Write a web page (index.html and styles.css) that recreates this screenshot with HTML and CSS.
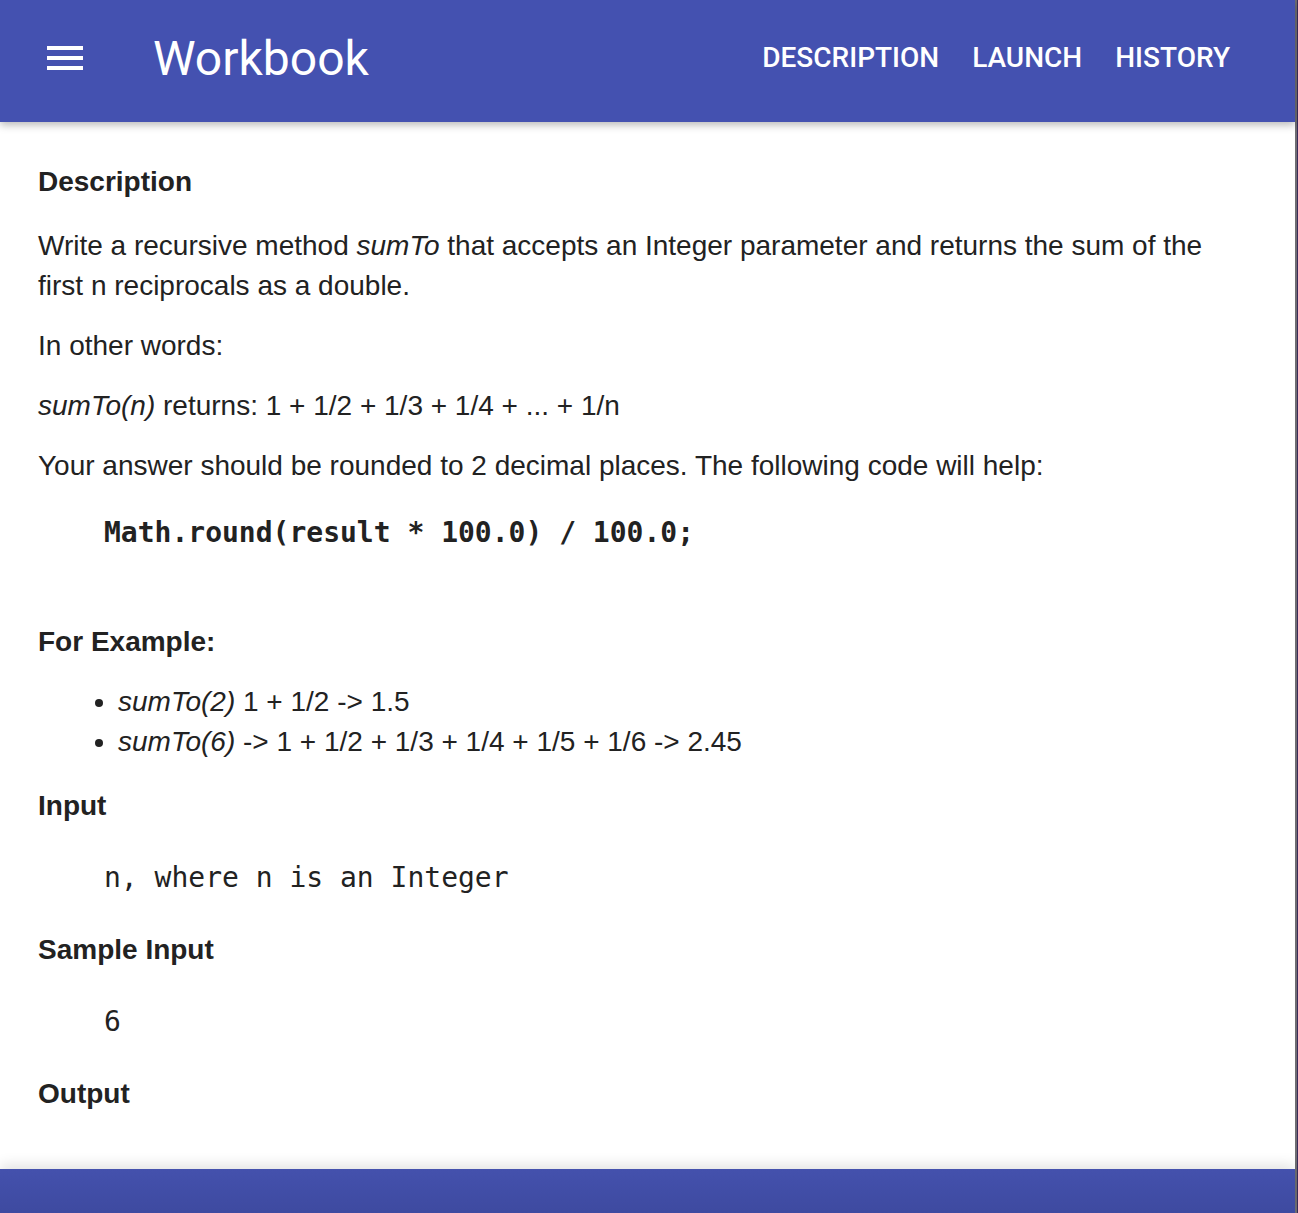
FILE: index.html
```html
<!DOCTYPE html>
<html lang="en">
<head>
<meta charset="utf-8">
<title>Workbook</title>
<link rel="stylesheet" href="styles.css">
</head>
<body>
<div class="app">
  <header class="topbar">
    <button class="menu" aria-label="Menu">
      <svg width="36" height="26" viewBox="0 0 36 26"><rect x="0" y="1" width="36" height="4" fill="#fff"/><rect x="0" y="11" width="36" height="4" fill="#fff"/><rect x="0" y="21" width="36" height="4" fill="#fff"/></svg>
    </button>
    <div class="title">Workbook</div>
    <nav class="nav">
      <a>DESCRIPTION</a>
      <a>LAUNCH</a>
      <a>HISTORY</a>
    </nav>
  </header>
  <main class="content">
    <h3 class="h first">Description</h3>
    <p class="p gap24">Write a recursive method <em>sumTo</em> that accepts an Integer parameter and returns the sum of the first n reciprocals as a double.</p>
    <p class="p">In other words:</p>
    <p class="p"><em>sumTo(n)</em> returns: 1 + 1/2 + 1/3 + 1/4 + ... + 1/n</p>
    <p class="p">Your answer should be rounded to 2 decimal places. The following code will help:</p>
    <pre class="code bold">Math.round(result * 100.0) / 100.0;</pre>
    <h3 class="h after-bold">For Example:</h3>
    <ul class="list">
      <li><em>sumTo(2)</em> 1 + 1/2 -&gt; 1.5</li>
      <li><em>sumTo(6)</em> -&gt; 1 + 1/2 + 1/3 + 1/4 + 1/5 + 1/6 -&gt; 2.45</li>
    </ul>
    <h3 class="h gap24">Input</h3>
    <pre class="code">n, where n is an Integer</pre>
    <h3 class="h gap32">Sample Input</h3>
    <pre class="code">6</pre>
    <h3 class="h gap32">Output</h3>
  </main>
</div>
<div class="bottombar"></div>
</body>
</html>
```
FILE: styles.css
```css
html, body {
  margin: 0;
  padding: 0;
}
body {
  background: #3b2c59;
  font-family: "Liberation Sans", Arial, sans-serif;
  color: #222;
}
.app {
  margin-right: 1px;
  border-right: 2px solid #6e6d72;
  background: #fff;
  min-height: 1213px;
}
.topbar {
  height: 122px;
  background: #4451b0;
  display: flex;
  align-items: center;
  box-shadow: 0 3px 8px rgba(0,0,0,0.28);
  position: relative;
  z-index: 1;
}
.menu {
  background: none;
  border: 0;
  padding: 0;
  margin: 0 0 0 47px;
  width: 36px;
  height: 26px;
  display: flex;
  margin-top: -7px;
}
.title {
  font-family: Roboto, "Open Sans", sans-serif;
  font-size: 48px;
  color: #fff;
  margin-left: 70px;
  margin-top: -6px;
  flex: 1;
}
.nav {
  display: flex;
  gap: 33px;
  margin-right: 65px;
  margin-top: -8px;
}
.nav a {
  font-family: Roboto, sans-serif;
  font-weight: 500;
  font-size: 28px;
  color: #fff;
  letter-spacing: 0;
}
.content {
  padding: 40px 64px 120px 38px;
  font-size: 28px;
  line-height: 40px;
}
.h {
  font-size: 28px;
  font-weight: bold;
  line-height: 40px;
  margin: 0;
  color: #222;
}
.p {
  margin: 20px 0 0;
}
.gap24 {
  margin-top: 24px;
}
.gap32 {
  margin-top: 32px;
}
em {
  font-style: italic;
}
.code {
  font-family: "DejaVu Sans Mono", "Liberation Mono", monospace;
  font-size: 28px;
  line-height: 40px;
  margin: 32px 0 0;
  padding-left: 66px;
  color: #222;
}
.code.bold {
  font-weight: bold;
  margin-top: 27px;
}
.after-bold {
  margin-top: 69px;
}
.list {
  margin: 20px 0 0;
  padding-left: 80px;
}
.list li {
  line-height: 40px;
}
.bottombar {
  position: fixed;
  left: 0;
  right: 3px;
  bottom: 0;
  height: 44px;
  background: linear-gradient(to bottom, #4451ad, #3e4aa0);
  box-shadow: 0 -4px 14px rgba(0,0,0,0.12);
}
```
